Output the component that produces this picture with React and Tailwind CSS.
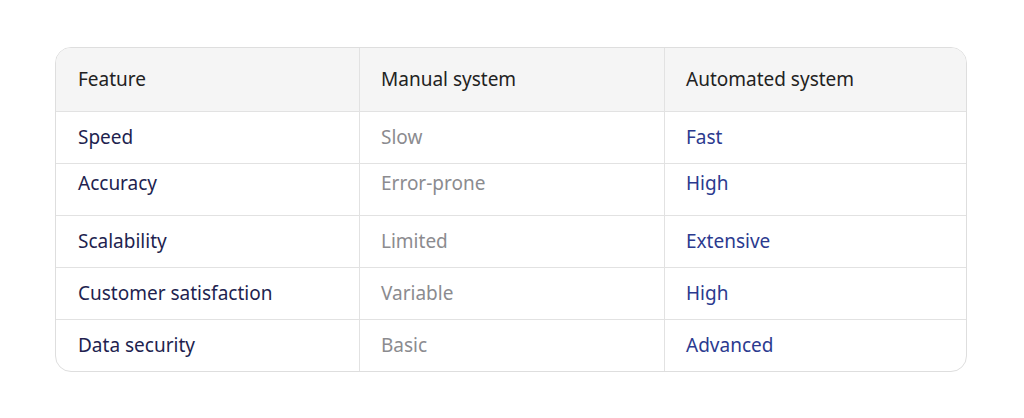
const rows = [
  { feature: 'Speed', manual: 'Slow', auto: 'Fast' },
  { feature: 'Accuracy', manual: 'Error-prone', auto: 'High', lift: true },
  { feature: 'Scalability', manual: 'Limited', auto: 'Extensive' },
  { feature: 'Customer satisfaction', manual: 'Variable', auto: 'High' },
  { feature: 'Data security', manual: 'Basic', auto: 'Advanced' },
];

const App = () => {
  return (
    <div
      className="w-[1024px] h-[418px] bg-white pt-[47px] pl-[55px]"
      style={{ fontFamily: '"Noto Sans", "Open Sans", sans-serif' }}
    >
      <div className="w-[912px] border border-[#dedede] rounded-[16px] overflow-hidden text-[19px]">
        <div className="grid grid-cols-[304px_305px_1fr] h-[64px] bg-[#f5f5f5] border-b border-[#e2e2e2] text-[#222222]">
          <div className="flex items-center pl-[22px] border-r border-[#e2e2e2]">Feature</div>
          <div className="flex items-center pl-[21px] border-r border-[#e2e2e2]">Manual system</div>
          <div className="flex items-center pl-[21px]">Automated system</div>
        </div>
        {rows.map((row, i) => (
          <div
            key={row.feature}
            className={`grid grid-cols-[304px_305px_1fr] ${
              i < rows.length - 1 ? 'h-[52px] border-b border-[#e2e2e2]' : 'h-[51px]'
            }`}
          >
            <div
              className={`flex items-center pl-[22px] border-r border-[#e2e2e2] text-[#221f4f] ${
                row.lift ? 'pb-3' : ''
              }`}
            >
              {row.feature}
            </div>
            <div
              className={`flex items-center pl-[21px] border-r border-[#e2e2e2] text-[#8b8b8f] ${
                row.lift ? 'pb-3' : ''
              }`}
            >
              {row.manual}
            </div>
            <div className={`flex items-center pl-[21px] text-[#2b3a8f] ${row.lift ? 'pb-3' : ''}`}>
              {row.auto}
            </div>
          </div>
        ))}
      </div>
    </div>
  );
};

export default App;
